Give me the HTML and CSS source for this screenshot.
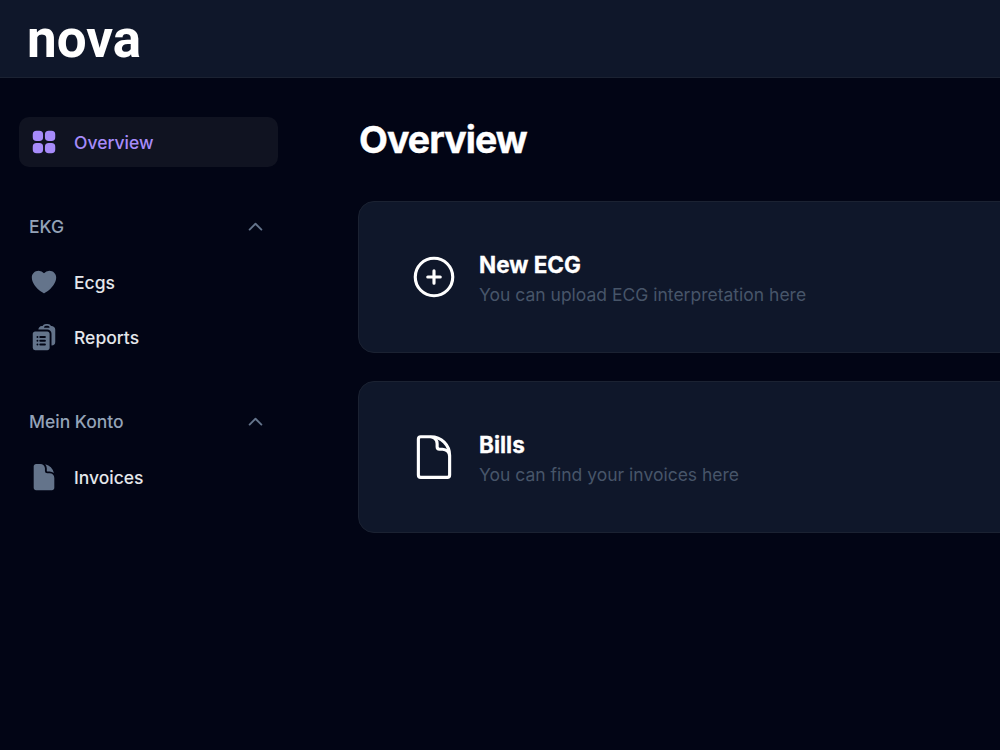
FILE: index.html
```html
<!DOCTYPE html>
<html lang="de">
<head>
  <meta charset="UTF-8">
  <meta name="viewport" content="width=device-width, initial-scale=1.0">
  <title>Overview - nova</title>
  <link rel="stylesheet" href="styles.css">
</head>
<body>
  <header class="topbar">
    <a href="#" class="logo" aria-label="nova">
      <svg width="120" height="70" viewBox="0 0 120 70">
        <text x="0" y="54" textLength="114" lengthAdjust="spacingAndGlyphs">nova</text>
      </svg>
    </a>
  </header>
  <div class="layout">
    <nav class="sidebar">
      <a href="#" class="nav-item active">
        <svg viewBox="0 0 24 24"><path fill-rule="evenodd" d="M3 6a3 3 0 0 1 3-3h2.25a3 3 0 0 1 3 3v2.25a3 3 0 0 1-3 3H6a3 3 0 0 1-3-3V6Zm9.75 0a3 3 0 0 1 3-3H18a3 3 0 0 1 3 3v2.25a3 3 0 0 1-3 3h-2.25a3 3 0 0 1-3-3V6ZM3 15.75a3 3 0 0 1 3-3h2.25a3 3 0 0 1 3 3V18a3 3 0 0 1-3 3H6a3 3 0 0 1-3-3v-2.25Zm9.75 0a3 3 0 0 1 3-3H18a3 3 0 0 1 3 3V18a3 3 0 0 1-3 3h-2.25a3 3 0 0 1-3-3v-2.25Z"/></svg>
        <span>Overview</span>
      </a>
      <div class="nav-group">
        <button class="group-label" type="button">
          <span>EKG</span>
          <svg viewBox="0 0 20 20"><path d="M5.3 12.5 10 7.8l4.7 4.7"/></svg>
        </button>
        <a href="#" class="nav-item">
          <svg viewBox="0 0 24 24"><path d="m11.645 20.91-.007-.003-.022-.012a15.247 15.247 0 0 1-.383-.218 25.18 25.18 0 0 1-4.244-3.17C4.688 15.36 2.25 12.174 2.25 8.25 2.25 5.322 4.714 3 7.688 3A5.5 5.5 0 0 1 12 5.052 5.5 5.5 0 0 1 16.313 3c2.973 0 5.437 2.322 5.437 5.25 0 3.925-2.438 7.111-4.739 9.256a25.175 25.175 0 0 1-4.244 3.17 15.247 15.247 0 0 1-.383.219l-.022.012-.007.004-.003.001a.752.752 0 0 1-.704 0l-.003-.001Z"/></svg>
          <span>Ecgs</span>
        </a>
        <a href="#" class="nav-item">
          <svg viewBox="0 0 24 24"><path fill-rule="evenodd" d="M7.502 6h7.128A3.375 3.375 0 0 1 18 9.375v9.375a3 3 0 0 0 3-3V6.108c0-1.505-1.125-2.811-2.664-2.94a48.972 48.972 0 0 0-.673-.05A3 3 0 0 0 15 1.5h-1.5a3 3 0 0 0-2.663 1.618c-.225.015-.45.032-.673.05C8.662 3.295 7.554 4.542 7.502 6ZM13.5 3A1.5 1.5 0 0 0 12 4.5h4.5A1.5 1.5 0 0 0 15 3h-1.5Z"/><path fill-rule="evenodd" d="M3 9.375C3 8.339 3.84 7.5 4.875 7.5h9.75c1.036 0 1.875.84 1.875 1.875v11.25c0 1.035-.84 1.875-1.875 1.875h-9.75A1.875 1.875 0 0 1 3 20.625V9.375ZM6 12a.75.75 0 0 1 .75-.75h.008a.75.75 0 0 1 .75.75v.008a.75.75 0 0 1-.75.75H6.75a.75.75 0 0 1-.75-.75V12Zm2.25 0a.75.75 0 0 1 .75-.75h3.75a.75.75 0 0 1 0 1.5H9a.75.75 0 0 1-.75-.75ZM6 15a.75.75 0 0 1 .75-.75h.008a.75.75 0 0 1 .75.75v.008a.75.75 0 0 1-.75.75H6.75a.75.75 0 0 1-.75-.75V15Zm2.25 0a.75.75 0 0 1 .75-.75h3.75a.75.75 0 0 1 0 1.5H9a.75.75 0 0 1-.75-.75ZM6 18a.75.75 0 0 1 .75-.75h.008a.75.75 0 0 1 .75.75v.008a.75.75 0 0 1-.75.75H6.75a.75.75 0 0 1-.75-.75V18Zm2.25 0a.75.75 0 0 1 .75-.75h3.75a.75.75 0 0 1 0 1.5H9a.75.75 0 0 1-.75-.75Z"/></svg>
          <span>Reports</span>
        </a>
      </div>
      <div class="nav-group">
        <button class="group-label" type="button">
          <span>Mein Konto</span>
          <svg viewBox="0 0 20 20"><path d="M5.3 12.5 10 7.8l4.7 4.7"/></svg>
        </button>
        <a href="#" class="nav-item">
          <svg viewBox="0 0 24 24"><path d="M5.625 1.5c-1.036 0-1.875.84-1.875 1.875v17.25c0 1.035.84 1.875 1.875 1.875h12.75c1.035 0 1.875-.84 1.875-1.875V12.75A3.75 3.75 0 0 0 16.5 9h-1.875a1.875 1.875 0 0 1-1.875-1.875V5.25A3.75 3.75 0 0 0 9 1.5H5.625Z"/><path d="M12.971 1.816A5.23 5.23 0 0 1 14.25 5.25v1.875c0 .207.168.375.375.375H16.5a5.23 5.23 0 0 1 3.434 1.279 9.768 9.768 0 0 0-6.963-6.963Z"/></svg>
          <span>Invoices</span>
        </a>
      </div>
    </nav>
    <main class="content">
      <h1>Overview</h1>
      <a href="#" class="card">
        <svg viewBox="0 0 24 24"><path d="M12 9v6m3-3H9m12 0a9 9 0 1 1-18 0 9 9 0 0 1 18 0Z"/></svg>
        <div class="card-text">
          <h2>New ECG</h2>
          <p>You can upload ECG interpretation here</p>
        </div>
      </a>
      <a href="#" class="card">
        <svg viewBox="0 0 24 24"><path d="M19.5 14.25v-2.625a3.375 3.375 0 0 0-3.375-3.375h-1.5A1.125 1.125 0 0 1 13.5 7.125v-1.5a3.375 3.375 0 0 0-3.375-3.375H5.625c-.621 0-1.125.504-1.125 1.125v17.25c0 .621.504 1.125 1.125 1.125h12.75c.621 0 1.125-.504 1.125-1.125V11.25a9 9 0 0 0-9-9"/></svg>
        <div class="card-text">
          <h2>Bills</h2>
          <p>You can find your invoices here</p>
        </div>
      </a>
    </main>
  </div>
</body>
</html>
```

FILE: styles.css
```css
* {
  box-sizing: border-box;
}
body {
  margin: 0;
  background: #020515;
  color: #fff;
  font-family: Inter, sans-serif;
  font-size: 17.5px;
  line-height: 25px;
  overflow: hidden;
}
a {
  color: inherit;
  text-decoration: none;
}
h1, h2, p {
  margin: 0;
}
.topbar {
  height: 78px;
  padding: 3px 27px 0;
  background: #0f172a;
  border-bottom: 1px solid #1b2232;
}
.logo svg {
  display: block;
}
.logo text {
  font-family: Roboto, sans-serif;
  font-size: 54px;
  font-weight: 700;
  fill: #fff;
}
.layout {
  display: flex;
  height: 672px;
}
.sidebar {
  width: 358px;
  flex-shrink: 0;
  padding: 39px 80px 0 19px;
}
.nav-item {
  display: flex;
  align-items: center;
  gap: 15px;
  height: 50px;
  padding: 0 10px;
  border-radius: 10px;
  font-weight: 500;
  color: #e5e7eb;
}
.nav-item svg {
  width: 30px;
  height: 30px;
  fill: #64748b;
}
.nav-item + .nav-item {
  margin-top: 5px;
}
.nav-item.active {
  background: #101321;
  color: #a78bfa;
}
.nav-item.active svg {
  fill: #a78bfa;
}
.nav-group {
  margin-top: 34px;
}
.nav-group + .nav-group {
  margin-top: 34px;
}
.group-label {
  display: flex;
  align-items: center;
  justify-content: space-between;
  width: 100%;
  height: 50px;
  margin-bottom: 6px;
  padding: 0 10px;
  border: none;
  background: none;
  color: #94a3b8;
  font: inherit;
  font-weight: 500;
}
.group-label svg {
  width: 25px;
  height: 25px;
  fill: none;
  stroke: #64748b;
  stroke-width: 1.5;
  stroke-linecap: round;
  stroke-linejoin: round;
}
.content {
  flex: 1;
  min-width: 0;
  padding-top: 39px;
}
h1 {
  margin-bottom: 39px;
  padding-left: 1px;
  font-size: 37.5px;
  line-height: 45px;
  font-weight: 700;
  letter-spacing: -0.94px;
  -webkit-text-stroke: 0.4px #fff;
}
/* cards run to the right edge of the window, which cuts them off */
.card {
  display: flex;
  align-items: center;
  gap: 20px;
  height: 152px;
  margin-right: -20px;
  margin-bottom: 28px;
  padding: 0 50px;
  background: #0f172a;
  border: 1px solid #1b2232;
  border-radius: 16px;
}
.card svg {
  width: 50px;
  height: 50px;
  fill: none;
  stroke: #fff;
  stroke-width: 1.5;
  stroke-linecap: round;
  stroke-linejoin: round;
}
.card h2 {
  font-size: 22.5px;
  line-height: 35px;
  font-weight: 700;
  -webkit-text-stroke: 0.3px #fff;
}
.card p {
  color: #475569;
}
```
